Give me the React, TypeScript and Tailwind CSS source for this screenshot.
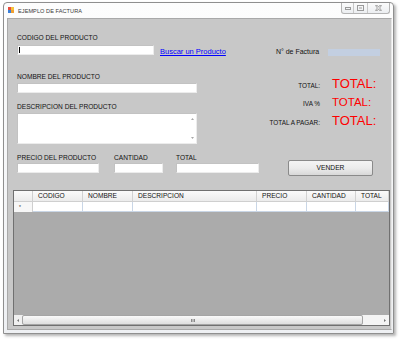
const font = "font-['Liberation_Sans',Arial,sans-serif]";

function Field({ className = "" }: { className?: string }) {
	return <div className={`h-[10px] border border-[#c2c2c2] border-b-[#ececec] border-r-[#ececec] bg-white ${className}`} />;
}

function Label({ children }: { children: string }) {
	return <div className="text-[6.6px] leading-[8px] whitespace-nowrap text-[#111]">{children}</div>;
}

function TotalRow({ label, size, leading, className }: { label: string; size: string; leading: string; className: string }) {
	return (
		<div className={`flex items-baseline ${className}`}>
			<span className="w-[53px] text-right text-[6.4px] whitespace-nowrap text-[#111]">{label}</span>
			<span className={`ml-[12px] whitespace-nowrap text-[#ff0000] ${size} ${leading}`}>TOTAL:</span>
		</div>
	);
}

const columns = [
	{ name: "CODIGO", w: "w-[50px]" },
	{ name: "NOMBRE", w: "w-[50px]" },
	{ name: "DESCRIPCION", w: "w-[124px]" },
	{ name: "PRECIO", w: "w-[50px]" },
	{ name: "CANTIDAD", w: "w-[49px]" },
	{ name: "TOTAL", w: "flex-1" },
];

function TitleButtons() {
	return (
		<div className="mr-[3px] flex h-[11px] rounded-b-[3px] border border-t-0 border-[#b4b4b4] bg-gradient-to-b from-[#fbfbfb] to-[#eceef1]">
			<div className="flex w-[12px] items-center justify-center border-r border-[#c8c8c8]">
				<svg width="6" height="3" viewBox="0 0 6 3">
					<rect x="0.5" y="0.5" width="5" height="2" fill="none" stroke="#9a9a9a" strokeWidth="1" />
				</svg>
			</div>
			<div className="flex w-[14px] items-center justify-center border-r border-[#c8c8c8]">
				<svg width="7" height="6" viewBox="0 0 7 6">
					<rect x="0.5" y="0.5" width="6" height="5" fill="none" stroke="#9a9a9a" strokeWidth="1" />
					<rect x="2" y="2" width="3" height="2" fill="#c9c9c9" />
				</svg>
			</div>
			<div className="flex w-[21px] items-center justify-center">
				<svg width="7" height="6" viewBox="0 0 7 6">
					<path d="M0.5 0.5 L2.5 0.5 L3.5 2 L4.5 0.5 L6.5 0.5 L4.7 3 L6.5 5.5 L4.5 5.5 L3.5 4 L2.5 5.5 L0.5 5.5 L2.3 3 Z" fill="#e2e2e2" stroke="#9a9a9a" strokeWidth="0.8" />
				</svg>
			</div>
		</div>
	);
}

export default function App() {
	return (
		<div className={`h-[339px] w-[400px] bg-white pl-[3px] pt-[2px] ${font}`}>
			<div className="flex h-[332px] w-[391px] flex-col rounded-t-[4px] border border-[#8f8f8f] bg-gradient-to-b from-[#fdfdfd] to-[#eef0f3] shadow-[2px_2px_3px_rgba(0,0,0,0.3)]">
				{/* title bar */}
				<div className="flex h-[15px] shrink-0 items-start">
					<svg className="ml-[4px] mt-[4px]" width="6" height="6" viewBox="0 0 6 6">
						<rect x="0" y="0" width="3" height="3" fill="#e94b3c" />
						<rect x="3" y="0" width="3" height="3" fill="#f6c23a" />
						<rect x="0" y="3" width="3" height="3" fill="#3b7fd9" />
						<rect x="3" y="3" width="3" height="3" fill="#f0a030" />
					</svg>
					<span className="ml-[4px] mt-[5px] text-[5.6px] leading-[7px] tracking-[0.05px] text-[#3a3a3a]">EJEMPLO DE FACTURA</span>
					<div className="ml-auto">
						<TitleButtons />
					</div>
				</div>

				{/* client area */}
				<div className="ml-[3px] mr-[1px] flex h-[312px] flex-col border border-[#a9a9a9] border-r-[#e6e6e6] bg-[#c8c8c8] pt-[15px]">
					{/* codigo row */}
					<div className="ml-[9px] flex items-start">
						<div className="w-[137px]">
							<Label>CODIGO DEL PRODUCTO</Label>
							<div className="mt-[3px] flex h-[10px] items-center border border-[#c2c2c2] border-b-[#ececec] border-r-[#ececec] bg-white pl-[1px]">
								<div className="h-[6px] w-px bg-black" />
							</div>
						</div>
						<span className="ml-[6px] mt-[14px] text-[7.5px] leading-[8px] whitespace-nowrap text-[#0000ff] underline">Buscar un Producto</span>
						<span className="ml-[50px] mt-[14px] text-[7px] leading-[8px] whitespace-nowrap text-[#111]">N° de Factura</span>
						<div className="ml-[9px] mt-[15px] h-[7px] w-[52px] bg-[#c3cfe1]" />
					</div>

					{/* nombre / descripcion + totals */}
					<div className="ml-[9px] mt-[17px] flex items-start">
						<div className="w-[180px]">
							<Label>NOMBRE DEL PRODUCTO</Label>
							<Field className="mt-[2px]" />
							<div className="mt-[10px]">
								<Label>DESCRIPCION DEL PRODUCTO</Label>
							</div>
							<div className="mt-[2px] flex h-[31px] justify-end border border-[#c2c2c2] border-b-[#ececec] border-r-[#ececec] bg-white">
								<div className="flex w-[8px] flex-col items-center justify-between py-[4px]">
									<svg width="3" height="2" viewBox="0 0 3 2">
										<path d="M0 2 L1.5 0 L3 2 Z" fill="#a8a8a8" />
									</svg>
									<svg width="3" height="2" viewBox="0 0 3 2">
										<path d="M0 0 L1.5 2 L3 0 Z" fill="#a8a8a8" />
									</svg>
								</div>
							</div>
						</div>
						<div className="ml-[70px] mt-[3px] flex flex-col">
							<TotalRow label="TOTAL:" size="text-[13px]" leading="leading-[15px]" className="" />
							<TotalRow label="IVA %" size="text-[11.5px]" leading="leading-[13px]" className="mt-[5px]" />
							<TotalRow label="TOTAL A PAGAR:" size="text-[13px]" leading="leading-[15px]" className="mt-[4px]" />
						</div>
					</div>

					{/* precio / cantidad / total / vender */}
					<div className="ml-[9px] mt-[10px] flex items-start">
						<div className="w-[82px]">
							<Label>PRECIO DEL PRODUCTO</Label>
							<Field className="mt-[1px]" />
						</div>
						<div className="ml-[15px] w-[49px]">
							<Label>CANTIDAD</Label>
							<Field className="mt-[1px]" />
						</div>
						<div className="ml-[13px] w-[83px]">
							<Label>TOTAL</Label>
							<Field className="mt-[1px]" />
						</div>
						<button className="ml-[29px] mt-[6px] flex h-[16px] w-[85px] items-center justify-center rounded-[2px] border border-[#8a8a8a] bg-gradient-to-b from-[#f4f4f4] via-[#ececec] to-[#d8d8d8] text-[6.7px] text-[#111]">
							VENDER
						</button>
					</div>

					{/* data grid */}
					<div className="ml-[5px] mt-[14px] flex h-[136px] w-[377px] flex-col border border-[#707070] bg-[#ababab]">
						<div className="flex h-[10px] bg-gradient-to-b from-[#fbfbfb] to-[#ececec]">
							<div className="w-[19px] border-r border-[#cfcfcf]" />
							{columns.map((c) => (
								<div key={c.name} className={`${c.w} flex items-center border-r border-[#d2d2d2] pl-[5px] text-[6.6px] leading-[8px] text-[#111]`}>
									{c.name}
								</div>
							))}
						</div>
						<div className="flex h-[11px] border-t border-[#cfcfcf]">
							<div className="flex w-[19px] items-center border-r border-[#cfcfcf] bg-[#f7f7f7] pl-[5px] text-[5px] leading-[6px] text-[#333]">*</div>
							{columns.map((c) => (
								<div key={c.name} className={`${c.w} border-r border-b border-[#c9d6e6] bg-white`} />
							))}
						</div>
						<div className="flex-1" />
						{/* horizontal scrollbar */}
						<div className="flex h-[10px] bg-[#e9e9e9]">
							<div className="flex w-[8px] items-center justify-center bg-[#f0f0f0]">
								<svg width="2" height="3" viewBox="0 0 2 3">
									<path d="M2 0 L0 1.5 L2 3 Z" fill="#777" />
								</svg>
							</div>
							<div className="flex w-[341px] items-center justify-center rounded-[2px] border border-[#a5a5a5] bg-gradient-to-b from-[#fafafa] to-[#dedede]">
								<svg width="4" height="3" viewBox="0 0 4 3">
									<rect x="0" y="0" width="1" height="3" fill="#8a8a8a" />
									<rect x="1.5" y="0" width="1" height="3" fill="#8a8a8a" />
									<rect x="3" y="0" width="1" height="3" fill="#8a8a8a" />
								</svg>
							</div>
							<div className="flex flex-1 items-center justify-end bg-[#f4f4f4] pr-[3px]">
								<svg width="2" height="3" viewBox="0 0 2 3">
									<path d="M0 0 L2 1.5 L0 3 Z" fill="#777" />
								</svg>
							</div>
						</div>
					</div>
				</div>
			</div>
		</div>
	);
}
